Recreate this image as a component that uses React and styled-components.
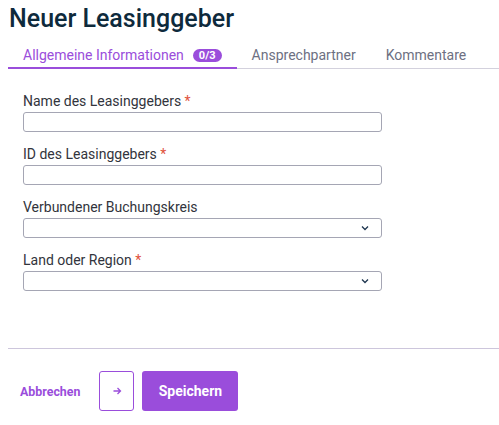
import styled, { createGlobalStyle } from 'styled-components';


const purple = '#9a4ddb';

const GlobalStyle = createGlobalStyle`
    body {
        margin: 0;
        background: #ffffff;
        font-family: Roboto, "Liberation Sans", sans-serif;
    }
`;

const StyledPage = styled.div`
    width: 499px;
    height: 425px;
    padding: 0 0 0 8px;
    box-sizing: border-box;
`;
const StyledTitle = styled.h1`
    margin: 0;
    padding: 5px 0 0 1px;
    font-size: 25px;
    line-height: 28px;
    font-weight: 500;
    color: #0e2a3c;
`;
const StyledTabBar = styled.div`
    display: flex;
    margin-top: 14px;
    border-bottom: 1px solid #d3d1dd;
`;
const StyledTab = styled.div`
    display: flex;
    align-items: center;
    gap: 9px;
    padding: 0 15px 3px;
    margin-bottom: -1px;
    font-size: 14px;
    line-height: 17px;
    color: ${({active}) => active ? purple : '#6d7082'};
    border-bottom: 2px solid ${({active}) => active ? purple : 'transparent'};
`;
const StyledBadge = styled.span`
    display: inline-flex;
    align-items: center;
    justify-content: center;
    height: 13px;
    padding: 0 6px;
    border-radius: 7px;
    background: ${purple};
    color: #ffffff;
    font-size: 11px;
    font-weight: 700;
`;
const StyledForm = styled.div`
    display: flex;
    flex-direction: column;
    gap: 14px;
    width: 374px;
    padding: 24px 0 0 15px;
    height: 279px;
    box-sizing: border-box;
`;
const StyledField = styled.div`
    display: flex;
    flex-direction: column;
    gap: 2px;
`;
const StyledLabel = styled.label`
    font-size: 14px;
    line-height: 17px;
    color: #32343c;
`;
const StyledRequired = styled.span`
    color: #e0523c;
`;
const StyledInput = styled.div`
    position: relative;
    height: 20px;
    box-sizing: border-box;
    border: 1px solid #a5a6b4;
    border-radius: 3px;
    background: #ffffff;
`;
const StyledChevron = styled.svg`
    position: absolute;
    right: 12px;
    top: 6px;
`;
const StyledDivider = styled.div`
    height: 1px;
    background: #cdc6dc;
`;
const StyledFooter = styled.div`
    display: flex;
    align-items: center;
    gap: 8px;
    padding: 22px 0 0 12px;
`;
const StyledLinkButton = styled.button`
    border: none;
    background: none;
    padding: 0;
    margin-right: 11px;
    font-family: inherit;
    font-size: 12.4px;
    font-weight: 700;
    color: ${purple};
`;
const StyledIconButton = styled.button`
    display: flex;
    align-items: center;
    justify-content: center;
    width: 35px;
    height: 40px;
    padding: 0;
    border: 1px solid ${purple};
    border-radius: 3px;
    background: #ffffff;
    color: ${purple};
`;
const StyledPrimaryButton = styled.button`
    width: 96px;
    height: 40px;
    border: none;
    border-radius: 3px;
    background: ${purple};
    color: #ffffff;
    font-family: inherit;
    font-size: 14px;
    font-weight: 700;
`;


const fields = [
    {label: 'Name des Leasinggebers', required: true},
    {label: 'ID des Leasinggebers', required: true},
    {label: 'Verbundener Buchungskreis', select: true},
    {label: 'Land oder Region', required: true, select: true},
];

const Chevron = () => (
    <StyledChevron width="8" height="6" viewBox="0 0 8 6">
        <path d="M1 1.5 L4 4.5 L7 1.5" fill="none" stroke="#1f3650" strokeWidth="1.3"/>
    </StyledChevron>
);

const App = () => (
    <StyledPage>
        <GlobalStyle/>
        <StyledTitle>Neuer Leasinggeber</StyledTitle>
        <StyledTabBar>
            <StyledTab active>
                Allgemeine Informationen
                <StyledBadge>0/3</StyledBadge>
            </StyledTab>
            <StyledTab>Ansprechpartner</StyledTab>
            <StyledTab>Kommentare</StyledTab>
        </StyledTabBar>
        <StyledForm>
            {fields.map(({label, required, select}) => (
                <StyledField key={label}>
                    <StyledLabel>
                        {label}
                        {required && <StyledRequired> *</StyledRequired>}
                    </StyledLabel>
                    <StyledInput>
                        {select && <Chevron/>}
                    </StyledInput>
                </StyledField>
            ))}
        </StyledForm>
        <StyledDivider/>
        <StyledFooter>
            <StyledLinkButton>Abbrechen</StyledLinkButton>
            <StyledIconButton>
                <svg width="10" height="10" viewBox="0 0 10 10">
                    <path d="M1.5 5 H8.5 M5.5 2 L8.5 5 L5.5 8" fill="none" stroke="currentColor" strokeWidth="1.3"/>
                </svg>
            </StyledIconButton>
            <StyledPrimaryButton>Speichern</StyledPrimaryButton>
        </StyledFooter>
    </StyledPage>
);

export default App;
